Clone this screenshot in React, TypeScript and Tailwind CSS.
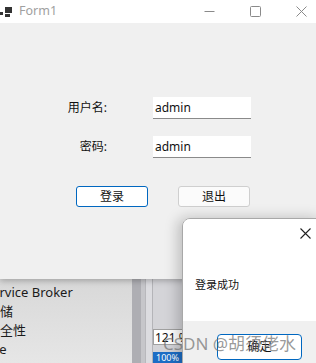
import React from "react";

const FONT = { fontFamily: '"Noto Sans", "Noto Sans CJK SC", sans-serif' };

export default function App() {
  return (
    <div className="relative w-[316px] h-[363px] overflow-hidden bg-[#d6d6da]" style={FONT}>
      {/* background application (behind the form) */}
      <div className="absolute left-0 top-[279px] w-[316px] h-[84px] flex">
        <div className="w-[132px] h-full bg-gradient-to-b from-[#d8d8d8] to-[#e6e6e6] pt-[4px] text-[13px] leading-[19px] text-[#1b1b1b] overflow-hidden">
          <div className="ml-[-15px] whitespace-nowrap">Service Broker</div>
          <div className="ml-[-13px] whitespace-nowrap">存储</div>
          <div className="ml-[-13px] whitespace-nowrap">安全性</div>
          <div className="ml-[-51px] whitespace-nowrap">Database</div>
        </div>
        <div className="w-[9px] h-full bg-[#aeaeb3]" />
        <div className="w-[4px] h-full bg-[#c6c6ca]" />
        <div className="w-[1px] h-full bg-[#b8b8bc]" />
        <div className="w-[6px] h-full bg-[#dcdce0]" />
        <div className="w-[1px] h-full bg-[#b4b4b8]" />
        <div className="flex-1 h-full bg-[#d4d4d8] flex flex-col pt-[50px]">
          <div className="w-[34px] h-[18px] bg-white border border-[#a0a0a0] text-[12px] leading-[16px] pl-[1px] text-[#111] whitespace-nowrap overflow-hidden">
            121 %
          </div>
          <div className="mt-[7px] w-[30px] h-[12px] bg-[#1c6dc5] text-[9px] leading-[12px] text-white pl-[3px] overflow-hidden">
            100%
          </div>
        </div>
      </div>

      {/* Form1 window */}
      <div className="absolute left-0 top-0 w-[324px] h-[279px] flex flex-col shadow-[0_2px_6px_rgba(0,0,0,0.25)]">
        <div className="h-[23px] bg-white flex items-center">
          <svg width="13" height="13" viewBox="0 0 13 13" className="ml-0 mt-[-1px]">
            <rect x="5" y="2" width="7" height="6" fill="#333" />
            <rect x="0" y="7" width="3" height="3" fill="#333" />
            <rect x="5" y="9" width="5" height="3" fill="#333" />
          </svg>
          <span className="ml-[6px] text-[12.5px] text-[#a0a0a0]">Form1</span>
          <div className="ml-auto flex h-full">
            <div className="w-[46px] h-full flex items-center justify-center">
              <svg width="11" height="11" viewBox="0 0 11 11">
                <line x1="0.5" y1="5.5" x2="10.5" y2="5.5" stroke="#8a8a8a" strokeWidth="1" />
              </svg>
            </div>
            <div className="w-[46px] h-full flex items-center justify-center">
              <svg width="11" height="11" viewBox="0 0 11 11">
                <rect x="0.5" y="0.5" width="10" height="10" rx="1" fill="none" stroke="#8a8a8a" strokeWidth="1" />
              </svg>
            </div>
            <div className="w-[46px] h-full flex items-center justify-center">
              <svg width="11" height="11" viewBox="0 0 11 11">
                <path d="M0.5 0.5 L10.5 10.5 M10.5 0.5 L0.5 10.5" stroke="#8a8a8a" strokeWidth="1" />
              </svg>
            </div>
          </div>
        </div>
        <div className="flex-1 bg-[#f0f0f0] flex flex-col pt-[74px]">
          <div className="flex items-center">
            <div className="w-[107px] text-right text-[12px] text-[#111]">用户名:</div>
            <div className="ml-[46px] w-[98px] h-[22px] bg-white border-b border-[#8a8a8a] flex items-center pl-[2px] text-[12px] text-[#111]">
              admin
            </div>
          </div>
          <div className="flex items-center mt-[17px]">
            <div className="w-[107px] text-right text-[12px] text-[#111]">密码:</div>
            <div className="ml-[46px] w-[98px] h-[22px] bg-white border-b border-[#8a8a8a] flex items-center pl-[2px] text-[12px] text-[#111]">
              admin
            </div>
          </div>
          <div className="flex mt-[28px]">
            <div className="ml-[76px] w-[72px] h-[21px] bg-white border border-[#0067c0] rounded-[3px] flex items-center justify-center text-[12px] text-[#111]">
              登录
            </div>
            <div className="ml-[30px] w-[72px] h-[21px] bg-[#fbfbfb] border border-[#cfcfcf] rounded-[3px] flex items-center justify-center text-[12px] text-[#111]">
              退出
            </div>
          </div>
        </div>
      </div>

      {/* Message box */}
      <div className="absolute left-[182px] top-[218px] w-[140px] h-[150px] rounded-tl-[8px] border border-[#a8a8a8] overflow-hidden flex flex-col shadow-[-4px_0_14px_rgba(0,0,0,0.22)]">
        <div className="h-[102px] bg-white flex flex-col">
          <div className="flex justify-end pr-[10px] pt-[9px]">
            <svg width="11" height="11" viewBox="0 0 11 11">
              <path d="M0.5 0.5 L10.5 10.5 M10.5 0.5 L0.5 10.5" stroke="#222" strokeWidth="1.1" />
            </svg>
          </div>
          <div className="mt-[39px] ml-[12px] text-[11px] leading-[14px] text-[#111]">登录成功</div>
        </div>
        <div className="flex-1 bg-[#f0f0f0] pt-[13px] pl-[34px]">
          <div className="w-[85px] h-[26px] bg-white border border-[#0067c0] rounded-[4px] flex items-center justify-center text-[12px] text-[#111]">
            确定
          </div>
        </div>
      </div>

      {/* watermark */}
      <div className="absolute left-[163px] top-[332px] text-[17px] leading-[24px] text-[rgba(110,110,110,0.7)] whitespace-nowrap">
        CSDN @胡须佬水
      </div>
    </div>
  );
}
